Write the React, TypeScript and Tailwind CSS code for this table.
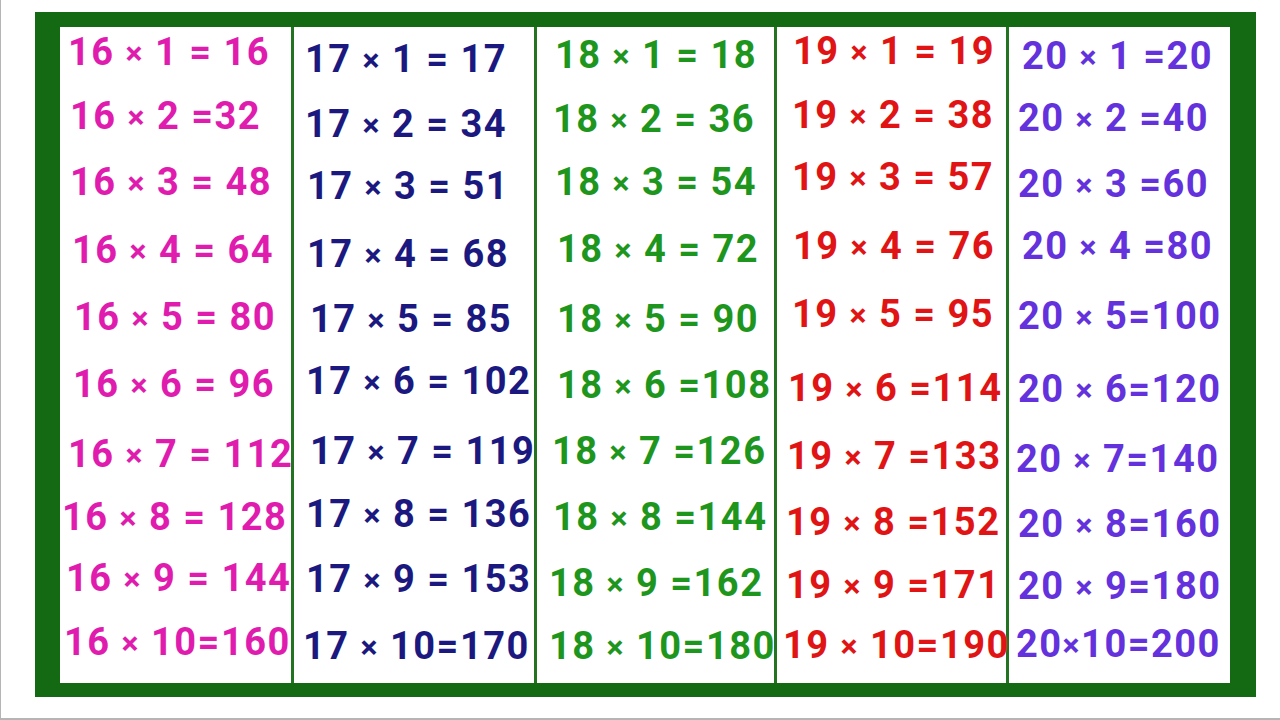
import React from 'react';

type Row = { text: string; pl: string; dy: string };

interface Column {
  width: string;
  color: string;
  shift: string;
  rowH: string;
  divider: boolean;
  rows: Row[];
}

const columns: Column[] = [
  {
    width: 'w-[234px]',
    color: 'text-[#e01cae]',
    shift: '-mt-[10px]',
    rowH: 'h-[66px]',
    divider: true,
    rows: [
      { text: '16 × 1 = 16', pl: 'pl-[8px]', dy: 'translate-y-[2px]' },
      { text: '16 × 2 =32', pl: 'pl-[10px]', dy: '' },
      { text: '16 × 3 = 48', pl: 'pl-[10px]', dy: '' },
      { text: '16 × 4 = 64', pl: 'pl-[12px]', dy: 'translate-y-[2px]' },
      { text: '16 × 5 = 80', pl: 'pl-[14px]', dy: 'translate-y-[3px]' },
      { text: '16 × 6 = 96', pl: 'pl-[13px]', dy: 'translate-y-[4px]' },
      { text: '16 × 7 = 112', pl: 'pl-[8px]', dy: 'translate-y-[8px]' },
      { text: '16 × 8 = 128', pl: 'pl-[2px]', dy: 'translate-y-[5px]' },
      { text: '16 × 9 = 144', pl: 'pl-[6px]', dy: '' },
      { text: '16 × 10=160', pl: 'pl-[4px]', dy: '-translate-y-[2px]' },
    ],
  },
  {
    width: 'w-[243px]',
    color: 'text-[#1b1980]',
    shift: '-mt-[1px]',
    rowH: 'h-[65px]',
    divider: true,
    rows: [
      { text: '17 × 1 = 17', pl: 'pl-[11px]', dy: '' },
      { text: '17 × 2 = 34', pl: 'pl-[11px]', dy: '' },
      { text: '17 × 3 = 51', pl: 'pl-[13px]', dy: '-translate-y-[3px]' },
      { text: '17 × 4 = 68', pl: 'pl-[13px]', dy: '' },
      { text: '17 × 5 = 85', pl: 'pl-[16px]', dy: '' },
      { text: '17 × 6 = 102', pl: 'pl-[12px]', dy: '-translate-y-[3px]' },
      { text: '17 × 7 = 119', pl: 'pl-[16px]', dy: 'translate-y-[2px]' },
      { text: '17 × 8 = 136', pl: 'pl-[12px]', dy: '' },
      { text: '17 × 9 = 153', pl: 'pl-[12px]', dy: '' },
      { text: '17 × 10=170', pl: 'pl-[9px]', dy: 'translate-y-[2px]' },
    ],
  },
  {
    width: 'w-[240px]',
    color: 'text-[#1e961e]',
    shift: '-mt-[5px]',
    rowH: 'h-[66px]',
    divider: true,
    rows: [
      { text: '18 × 1 = 18', pl: 'pl-[18px]', dy: '' },
      { text: '18 × 2 = 36', pl: 'pl-[16px]', dy: '-translate-y-[2px]' },
      { text: '18 × 3 = 54', pl: 'pl-[18px]', dy: '-translate-y-[5px]' },
      { text: '18 × 4 = 72', pl: 'pl-[20px]', dy: '-translate-y-[4px]' },
      { text: '18 × 5 = 90', pl: 'pl-[20px]', dy: '' },
      { text: '18 × 6 =108', pl: 'pl-[20px]', dy: '' },
      { text: '18 × 7 =126', pl: 'pl-[15px]', dy: '' },
      { text: '18 × 8 =144', pl: 'pl-[16px]', dy: '' },
      { text: '18 × 9 =162', pl: 'pl-[12px]', dy: '' },
      { text: '18 × 10=180', pl: 'pl-[12px]', dy: '-translate-y-[3px]' },
    ],
  },
  {
    width: 'w-[232px]',
    color: 'text-[#e01414]',
    shift: '-mt-[9px]',
    rowH: 'h-[66px]',
    divider: true,
    rows: [
      { text: '19 × 1 = 19', pl: 'pl-[16px]', dy: '' },
      { text: '19 × 2 = 38', pl: 'pl-[15px]', dy: '-translate-y-[2px]' },
      { text: '19 × 3 = 57', pl: 'pl-[15px]', dy: '-translate-y-[6px]' },
      { text: '19 × 4 = 76', pl: 'pl-[16px]', dy: '-translate-y-[3px]' },
      { text: '19 × 5 = 95', pl: 'pl-[15px]', dy: '-translate-y-[1px]' },
      { text: '19 × 6 =114', pl: 'pl-[11px]', dy: 'translate-y-[7px]' },
      { text: '19 × 7 =133', pl: 'pl-[10px]', dy: 'translate-y-[9px]' },
      { text: '19 × 8 =152', pl: 'pl-[9px]', dy: 'translate-y-[9px]' },
      { text: '19 × 9 =171', pl: 'pl-[9px]', dy: 'translate-y-[6px]' },
      { text: '19 × 10=190', pl: 'pl-[6px]', dy: '' },
    ],
  },
  {
    width: 'w-[221px]',
    color: 'text-[#6332dc]',
    shift: '-mt-[8px]',
    rowH: 'h-[66px]',
    divider: false,
    rows: [
      { text: '20 × 1 =20', pl: 'pl-[13px]', dy: 'translate-y-[4px]' },
      { text: '20 × 2 =40', pl: 'pl-[9px]', dy: '' },
      { text: '20 × 3 =60', pl: 'pl-[9px]', dy: '' },
      { text: '20 × 4 =80', pl: 'pl-[13px]', dy: '-translate-y-[4px]' },
      { text: '20 × 5=100', pl: 'pl-[9px]', dy: '' },
      { text: '20 × 6=120', pl: 'pl-[9px]', dy: 'translate-y-[7px]' },
      { text: '20 × 7=140', pl: 'pl-[7px]', dy: 'translate-y-[11px]' },
      { text: '20 × 8=160', pl: 'pl-[9px]', dy: 'translate-y-[10px]' },
      { text: '20 × 9=180', pl: 'pl-[9px]', dy: 'translate-y-[6px]' },
      { text: '20×10=200', pl: 'pl-[7px]', dy: '-translate-y-[2px]' },
    ],
  },
];

function Fact({ text }: { text: string }) {
  const [left, right] = text.split('×');
  return (
    <span className="whitespace-nowrap">
      {left}
      <span className="text-[32px] align-[1px]">×</span>
      {right}
    </span>
  );
}

export default function App() {
  return (
    <div className="w-[1280px] h-[720px] bg-white border-l border-b-2 border-[#b5b5b5] overflow-hidden">
      <div className="ml-[34px] mt-[12px] w-[1221px] h-[685px] bg-[#136a13] pt-[15px] pb-[14px] pl-[25px] pr-[26px]">
        <div className="flex h-full bg-white">
          {columns.map((col, i) => (
            <div
              key={i}
              className={`${col.width} shrink-0 h-full ${
                col.divider ? 'border-r-[3px] border-[#237323]' : ''
              }`}
            >
              <div className={`flex flex-col ${col.shift}`}>
                {col.rows.map((row, r) => (
                  <div
                    key={r}
                    className={`${col.rowH} flex items-center ${row.pl} ${row.dy} ${col.color} text-[38px] tracking-[1.5px] font-bold leading-none font-['Roboto',sans-serif] relative z-10`}
                  >
                    <Fact text={row.text} />
                  </div>
                ))}
              </div>
            </div>
          ))}
        </div>
      </div>
    </div>
  );
}
